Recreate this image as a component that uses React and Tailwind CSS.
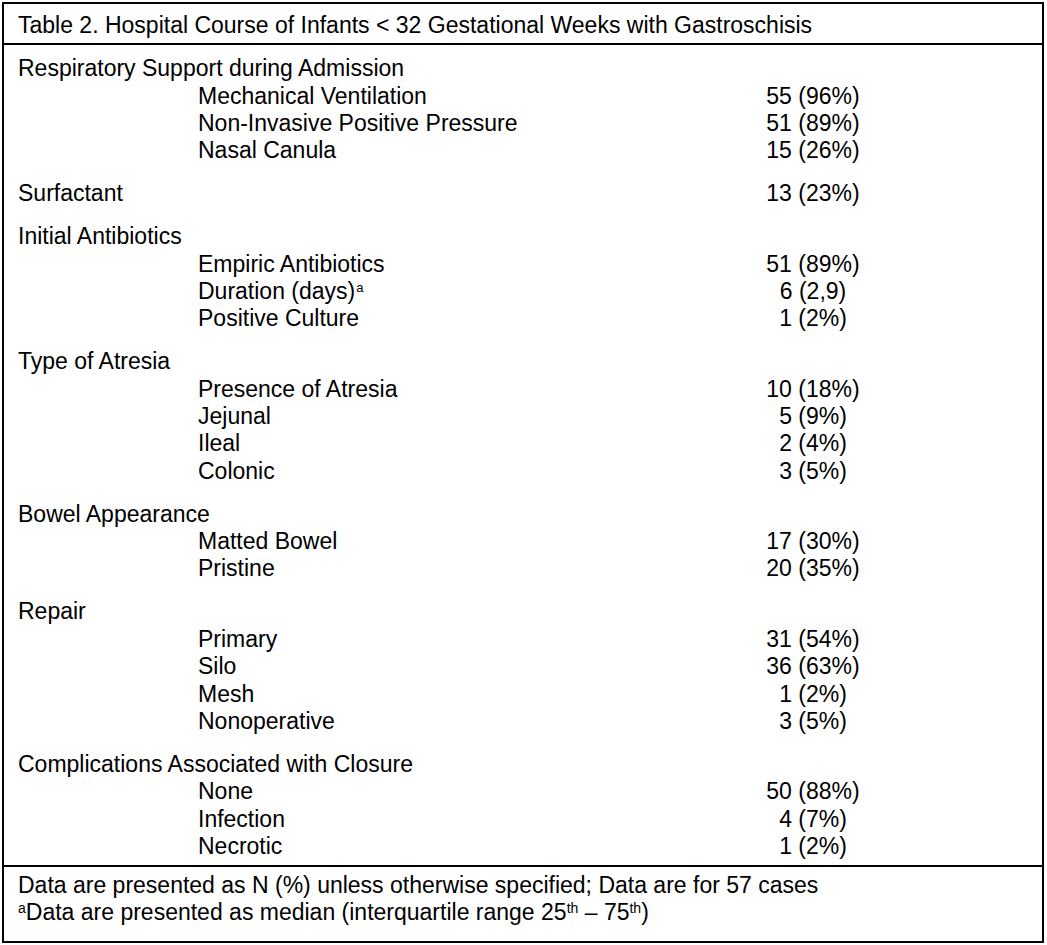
const groups = [
  {
    title: "Respiratory Support during Admission",
    rows: [
      ["Mechanical Ventilation", "55 (96%)"],
      ["Non-Invasive Positive Pressure", "51 (89%)"],
      ["Nasal Canula", "15 (26%)"],
    ],
  },
  { title: "Surfactant", value: "13 (23%)", rows: [] },
  {
    title: "Initial Antibiotics",
    rows: [
      ["Empiric Antibiotics", "51 (89%)"],
      ["Duration (days)", "6 (2,9)", true],
      ["Positive Culture", "1 (2%)"],
    ],
  },
  {
    title: "Type of Atresia",
    rows: [
      ["Presence of Atresia", "10 (18%)"],
      ["Jejunal", "5 (9%)"],
      ["Ileal", "2 (4%)"],
      ["Colonic", "3 (5%)"],
    ],
  },
  {
    title: "Bowel Appearance",
    rows: [
      ["Matted Bowel", "17 (30%)"],
      ["Pristine", "20 (35%)"],
    ],
  },
  {
    title: "Repair",
    rows: [
      ["Primary", "31 (54%)"],
      ["Silo", "36 (63%)"],
      ["Mesh", "1 (2%)"],
      ["Nonoperative", "3 (5%)"],
    ],
  },
  {
    title: "Complications Associated with Closure",
    rows: [
      ["None", "50 (88%)"],
      ["Infection", "4 (7%)"],
      ["Necrotic", "1 (2%)"],
    ],
  },
];

function Row({ label, value, sub, note }) {
  return (
    <div className="flex h-[27.4px] items-center">
      <div className={`w-[695px] whitespace-nowrap ${sub ? "pl-[180px]" : ""}`}>
        {label}
        {note && <sup className="text-[13px] ml-[1px]">a</sup>}
      </div>
      <div className="w-[200px] text-center whitespace-nowrap">{value}</div>
    </div>
  );
}

export default function App() {
  return (
    <div className="bg-white w-[1047px] h-[945px] pt-[2px] pl-[2px] text-black text-[23px] leading-[27px] font-['Liberation_Sans',Arial,sans-serif]">
      <div className="w-[1042px] h-[941px] border-2 border-black flex flex-col">
        <div className="h-[41px] flex items-center pt-[3px] pl-[14px] border-b-2 border-black whitespace-nowrap">
          Table 2. Hospital Course of Infants &lt; 32 Gestational Weeks with Gastroschisis
        </div>
        <div className="flex-1 pt-[10px] pl-[14px] flex flex-col gap-[15.5px] border-b-2 border-black">
          {groups.map((g) => (
            <div key={g.title}>
              <Row label={g.title} value={g.value} />
              {g.rows.map(([l, v, n]) => (
                <Row key={l} label={l} value={v} sub note={n} />
              ))}
            </div>
          ))}
        </div>
        <div className="h-[74px] pt-[5px] pl-[14px] whitespace-nowrap">
          <div className="h-[27px]">
            Data are presented as N (%) unless otherwise specified; Data are for 57 cases
          </div>
          <div className="h-[27px]">
            <sup className="text-[14px]">a</sup>Data are presented as median (interquartile range 25
            <sup className="text-[14px]">th</sup> – 75<sup className="text-[14px]">th</sup>)
          </div>
        </div>
      </div>
    </div>
  );
}
